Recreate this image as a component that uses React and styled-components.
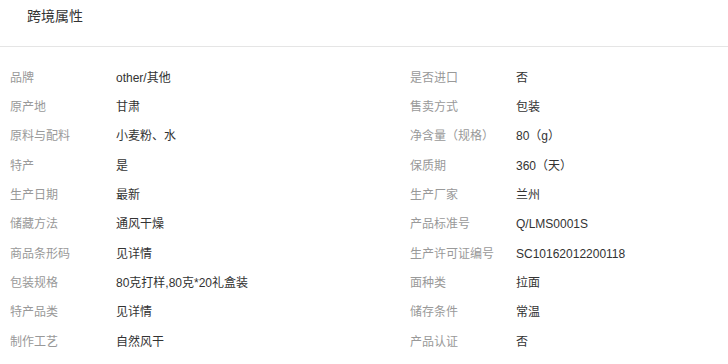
import styled, { createGlobalStyle } from 'styled-components';

const GlobalStyle = createGlobalStyle`
  html, body {
    margin: 0;
    padding: 0;
    background: #fff;
  }
  body {
    font-family: "Liberation Sans", Arial, "Noto Sans CJK SC", sans-serif;
  }
`;

const rows = [
  ['品牌', 'other/其他', '是否进口', '否'],
  ['原产地', '甘肃', '售卖方式', '包装'],
  ['原料与配料', '小麦粉、水', '净含量（规格）', '80（g）'],
  ['特产', '是', '保质期', '360（天）'],
  ['生产日期', '最新', '生产厂家', '兰州'],
  ['储藏方法', '通风干燥', '产品标准号', 'Q/LMS0001S'],
  ['商品条形码', '见详情', '生产许可证编号', 'SC10162012200118'],
  ['包装规格', '80克打样,80克*20礼盒装', '面种类', '拉面'],
  ['特产品类', '见详情', '储存条件', '常温'],
  ['制作工艺', '自然风干', '产品认证', '否'],
];

const App = () => {
  return (
    <>
      <GlobalStyle />
      <Panel>
        <Header>
          <Title>跨境属性</Title>
        </Header>
        <AttrGrid>
          {rows.map(([l1, v1, l2, v2]) => (
            <Row key={l1}>
              <Cell>
                <Label>{l1}</Label>
                <Value>{v1}</Value>
              </Cell>
              <Cell>
                <Label>{l2}</Label>
                <Value>{v2}</Value>
              </Cell>
            </Row>
          ))}
        </AttrGrid>
      </Panel>
    </>
  );
};

export default App;

const Panel = styled.div`
  width: 728px;
  height: 364px;
  overflow: hidden;
`;

const Header = styled.div`
  height: 47px;
  box-sizing: border-box;
  padding: 7px 0 0 27px;
  border-bottom: 1px solid #e5e5e5;
`;

const Title = styled.div`
  font-size: 14px;
  line-height: 18px;
  color: #333;
`;

const AttrGrid = styled.div`
  padding: 16px 0 0 10px;
  display: flex;
  flex-direction: column;
`;

const Row = styled.div`
  display: grid;
  grid-template-columns: 400px 1fr;
  height: 29.33px;
  align-items: center;
`;

const Cell = styled.div`
  display: flex;
  align-items: center;
  font-size: 12px;
  line-height: 16px;
`;

const Label = styled.span`
  width: 106px;
  flex-shrink: 0;
  color: #999;
`;

const Value = styled.span`
  color: #333;
`;
